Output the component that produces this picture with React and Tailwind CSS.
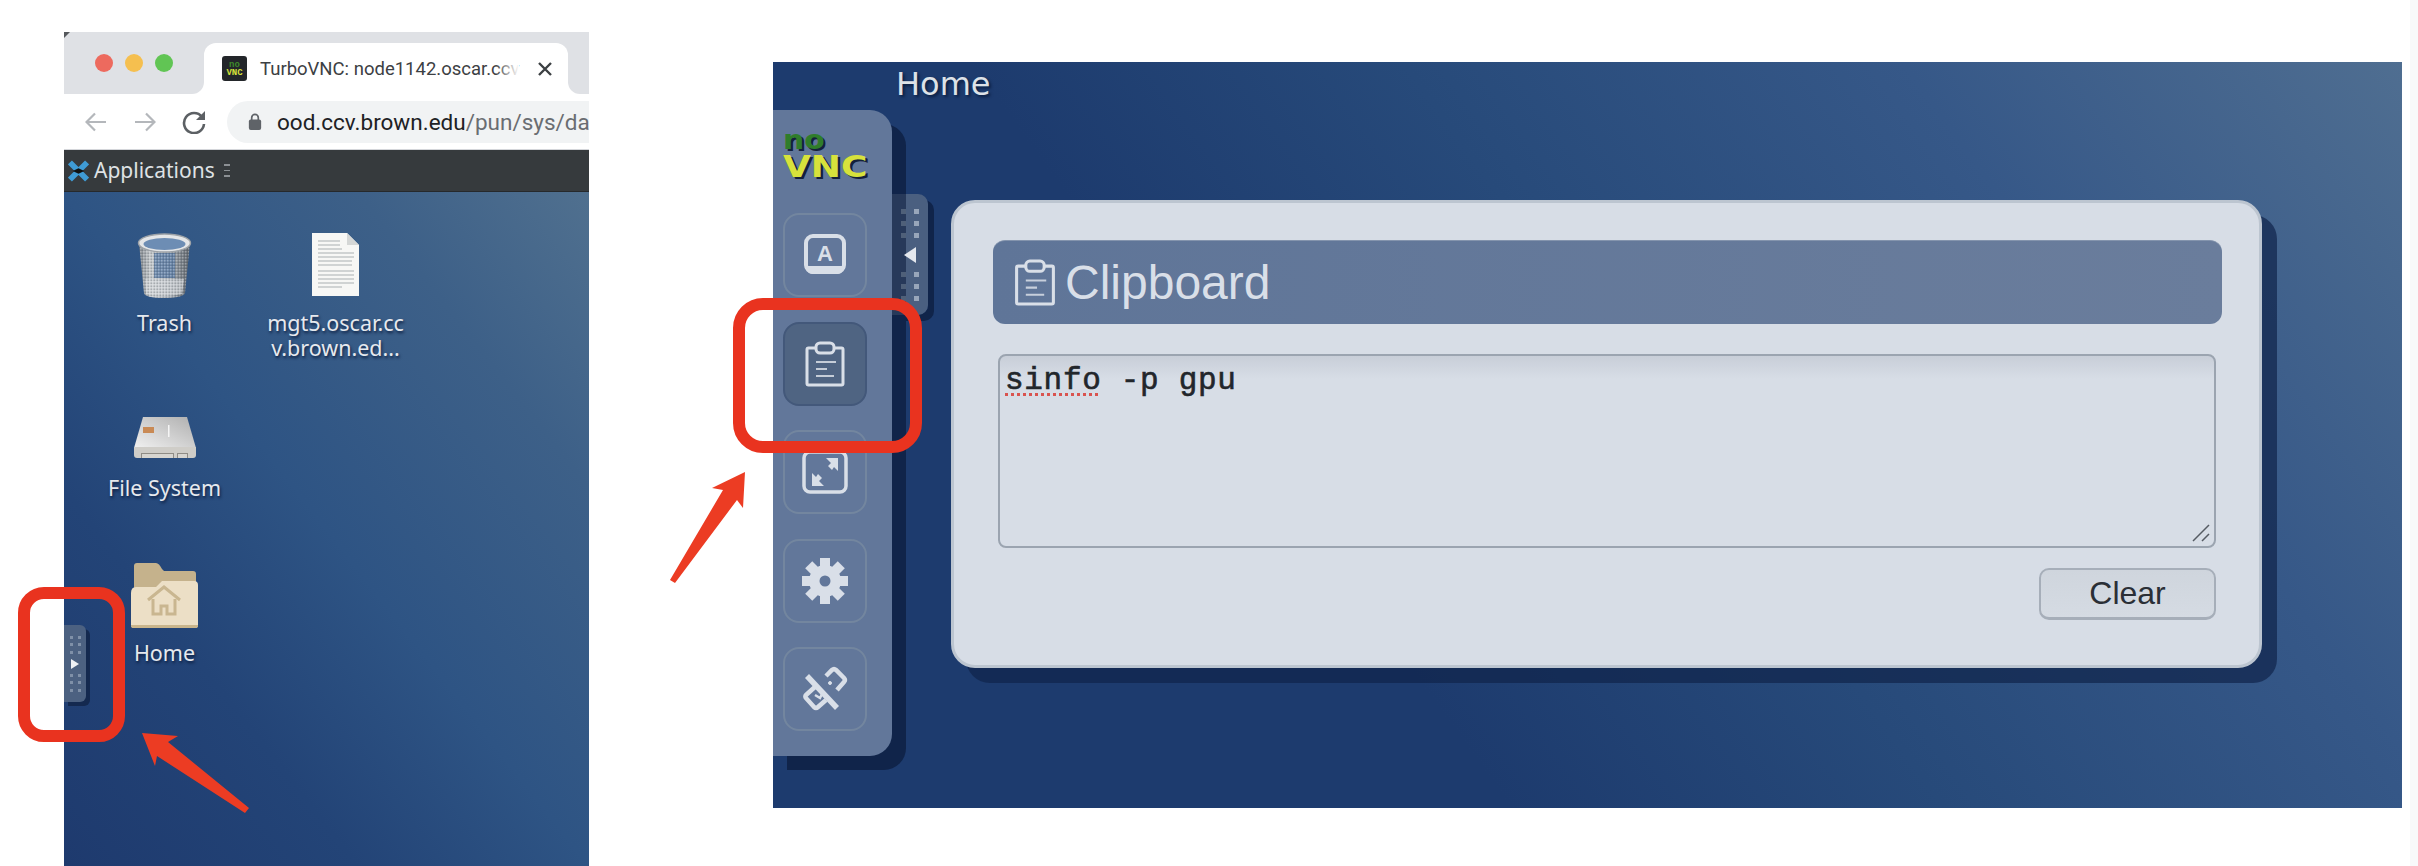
const sans = "font-['Liberation_Sans',Arial,sans-serif]"

function ClipboardIcon({ className }) {
  return (
    <svg viewBox="0 0 40 46" fill="none" stroke="#d9dfe8" className={className}>
      <path d="M11 7H3.500a1.500 1.500 0 0 0-1.500 1.500v34A1.500 1.500 0 0 0 3.500 44h33a1.500 1.500 0 0 0 1.500-1.500v-34A1.500 1.500 0 0 0 36.500 7H29" strokeWidth="3" />
      <rect x="11" y="2" width="18" height="10" rx="4" strokeWidth="3" />
      <path d="M11 21h20M11 28h11M11 35h18" strokeWidth="2" opacity="0.85" />
    </svg>
  )
}

function ExtraKeysIcon() {
  return (
    <svg viewBox="0 0 42 42" className="w-[42px] h-[42px]" fill="none">
      <rect x="2" y="2" width="38" height="36" rx="7" stroke="#d9dfe8" strokeWidth="4" />
      <path d="M3 32h36v3a5 5 0 0 1-5 5H8a5 5 0 0 1-5-5z" fill="#d9dfe8" />
      <text x="21" y="27" textAnchor="middle" fontSize="22" fontWeight="700" fontFamily="Liberation Sans" fill="#d9dfe8">A</text>
    </svg>
  )
}

function FullscreenIcon() {
  return (
    <svg viewBox="0 0 46 44" className="w-[46px] h-[44px]" fill="none">
      <rect x="2" y="2" width="42" height="40" rx="6" stroke="#d9dfe8" strokeWidth="3.500" />
      <path d="M24 8h12v13l-4-4-2 3-4-4 3-3z" fill="#d9dfe8" />
      <path d="M22 36H10V23l4 4 2-3 4 4-3 3z" fill="#d9dfe8" />
    </svg>
  )
}

function GearIcon() {
  const teeth = [0, 45, 90, 135, 180, 225, 270, 315]
  return (
    <svg viewBox="0 0 46 46" className="w-[46px] h-[46px]">
      {teeth.map((deg) => (
        <rect key={deg} x="18" y="0" width="10" height="12" fill="#d9dfe8" transform={`rotate(${deg} 23 23)`} />
      ))}
      <circle cx="23" cy="23" r="16" fill="#d9dfe8" />
      <circle cx="23" cy="23" r="5.500" fill="#62779a" />
    </svg>
  )
}

function DisconnectIcon() {
  return (
    <svg viewBox="0 0 46 46" className="w-[46px] h-[46px]" fill="none" stroke="#d9dfe8" strokeWidth="4.500">
      <path d="M5 10l30 32" strokeWidth="5.500" />
      <path d="M24 10l6-6a3 3 0 0 1 4 0l8 8a3 3 0 0 1 0 4l-7 8" />
      <path d="M14 20l-10 9a2 2 0 0 0 0 3l8 9a3 3 0 0 0 4 0l8-7" />
      <circle cx="28" cy="17" r="1.500" fill="#d9dfe8" strokeWidth="1" />
      <path d="M13 29l5 3 2-4" strokeWidth="2.500" />
    </svg>
  )
}

function ToolButton({ active, children }) {
  return (
    <div
      className={`w-[84px] h-[84px] rounded-2xl border-2 flex items-center justify-center ${
        active ? "bg-[#4f6482] border-[#43587a]" : "border-[#73869f]"
      }`}
    >
      {children}
    </div>
  )
}

function SmallDots() {
  return (
    <div className="grid grid-cols-2 gap-x-[5px] gap-y-[4.500px]">
      {[0, 1, 2, 3, 4, 5].map((n) => (
        <div key={n} className="w-[3px] h-[3px] bg-[#7f90a8]" />
      ))}
    </div>
  )
}

function BigDots() {
  return (
    <div className="grid grid-cols-2 gap-x-[8px] gap-y-[7px]">
      {[0, 1, 2, 3, 4, 5].map((n) => (
        <div key={n} className={`w-[5px] h-[5px] ${n % 2 ? "bg-[#98a6ba]" : "bg-[#4f6079]"}`} />
      ))}
    </div>
  )
}

function TrashIcon() {
  return (
    <svg viewBox="0 0 55 66" className="w-[55px] h-[66px]">
      <defs>
        <linearGradient id="can" x1="0" x2="1" y1="0" y2="0">
          <stop offset="0" stopColor="#7f858b" />
          <stop offset="0.22" stopColor="#c6cacd" />
          <stop offset="0.6" stopColor="#a2a9b1" />
          <stop offset="1" stopColor="#5f656c" />
        </linearGradient>
        <pattern id="mesh" width="3" height="3" patternUnits="userSpaceOnUse">
          <rect width="1.500" height="1.500" fill="#ffffff" opacity="0.3" />
          <rect x="1.500" y="1.500" width="1.500" height="1.500" fill="#30363c" opacity="0.25" />
        </pattern>
      </defs>
      <path d="M2 10l5 50q1 5 20 5t21-5l5-50z" fill="url(#can)" />
      <rect x="17" y="20" width="21" height="25" fill="#4f73a3" opacity="0.7" />
      <path d="M8 46h39l-2 15q-18 4-36 0z" fill="#d6d9db" opacity="0.7" />
      <path d="M2 10l5 50q1 5 20 5t21-5l5-50z" fill="url(#mesh)" />
      <ellipse cx="27.500" cy="10" rx="26" ry="9" fill="#e4e6e8" stroke="#9ea3a8" strokeWidth="1.500" />
      <ellipse cx="27.500" cy="11" rx="21" ry="6" fill="#6d8db4" />
    </svg>
  )
}

function DocIcon() {
  return (
    <svg viewBox="0 0 47 63" className="w-[47px] h-[63px]">
      <path d="M0 0h35l12 12v51H0z" fill="#f7f7f5" />
      <path d="M35 0l12 12H35z" fill="#d5d7d6" />
      <path
        d="M6 8h22M6 12h22M6 16h24M6 20h36M6 24h36M6 28h34M6 32h34M6 38h36M6 42h36M6 46h36M6 50h36M6 54h24"
        stroke="#c4c7c7"
        strokeWidth="1.500"
      />
    </svg>
  )
}

function DiskIcon() {
  return (
    <svg viewBox="0 0 64 42" className="w-[64px] h-[42px]">
      <defs>
        <linearGradient id="disk" x1="0" x2="1" y1="1" y2="0">
          <stop offset="0" stopColor="#f1f1f1" />
          <stop offset="1" stopColor="#aeaeae" />
        </linearGradient>
      </defs>
      <path d="M10 0h44l9 31H1z" fill="url(#disk)" />
      <rect x="10" y="10" width="11" height="6" fill="#c98a55" />
      <rect x="35" y="8" width="1.500" height="12" fill="#f5f5f5" />
      <path d="M1 30h62v8q0 3-3 3H4q-3 0-3-3z" fill="#cfcdc8" />
      <path d="M8 36h33v5H8zM44 36h11v5H44z" fill="#8f8c86" />
      <path d="M9 37h31v4H9zM45 37h9v4h-9z" fill="#d7d5d0" />
    </svg>
  )
}

function FolderIcon() {
  return (
    <svg viewBox="0 0 67 65" className="w-[67px] h-[65px]">
      <path d="M3 3q0-3 3-3h19q3 0 6 6l2 2h29q3 0 3 3v30H3z" fill="#c5b28c" />
      <path d="M0 30q0-6 5-6h20l6-6h32q4 0 4 4v40q0 3-3 3H3q-3 0-3-3z" fill="#ecdfc6" />
      <path d="M0 62h67v1q0 2-3 2H3q-3 0-3-2z" fill="#c9b58c" />
      <g fill="none" stroke="#c9b690" strokeWidth="3">
        <path d="M17 37l16-13 16 13" />
        <path d="M22 36v15h8v-8h6v8h8V36" />
      </g>
    </svg>
  )
}

function DesktopItem({ children, lines }) {
  return (
    <div className="flex flex-col items-center">
      <div className="h-[77px] flex items-start justify-center">{children}</div>
      <div className="font-['Noto_Sans',sans-serif] text-[21.500px] leading-[25px] text-[#e6e9ee] text-center whitespace-nowrap [text-shadow:1px_2px_3px_#0b1d3f]">
        {lines.map((line) => (
          <div key={line}>{line}</div>
        ))}
      </div>
    </div>
  )
}

function BrowserShot() {
  return (
    <div className="w-[525px] mt-[32px] flex flex-col shrink-0 overflow-hidden">
      {/* Tab strip */}
      <div className="h-[62px] bg-[linear-gradient(180deg,#dfe1e5_50%,#ffffff_50%)] flex items-end">
        <div className="w-[140px] h-[62px] pb-[22px] pl-[31px] flex items-end gap-[12px] rounded-br-[12px] bg-[#dfe1e5]">
          <div className="w-[18px] h-[18px] rounded-full bg-[#ed6a5e]" />
          <div className="w-[18px] h-[18px] rounded-full bg-[#f5bf4f]" />
          <div className="w-[18px] h-[18px] rounded-full bg-[#61c554]" />
        </div>
        <div className="w-[364px] h-[51px] bg-white rounded-t-[12px] pl-[18px] pr-[16px] flex items-center gap-[13px]">
          <div className="w-[25px] h-[25px] rounded-[3px] bg-[#23262a] flex flex-col items-center justify-center font-['Liberation_Mono',monospace] font-bold text-[9px] leading-[8px] shrink-0">
            <span className="text-[#3e8a2b]">no</span>
            <span className="text-[#d6e23a]">VNC</span>
          </div>
          <div className="relative whitespace-nowrap font-['Roboto',sans-serif] text-[18.500px] leading-[22px] text-[#3c4043]">
            TurboVNC: node1142.oscar.ccv
            <div className="absolute inset-y-0 right-0 w-[24px] bg-gradient-to-r from-white/0 to-white" />
          </div>
          <svg viewBox="0 0 14 14" className="w-[14px] h-[14px] ml-auto shrink-0" stroke="#3c4043" strokeWidth="2.400">
            <path d="M1 1l12 12M13 1L1 13" />
          </svg>
        </div>
        <div className="flex-1 h-[62px] bg-[#dfe1e5] rounded-bl-[12px]" />
      </div>
      {/* Toolbar */}
      <div className="h-[56px] bg-white border-b border-[#d4d6da] flex items-center pl-[21px]">
        <svg viewBox="0 0 22 20" className="w-[22px] h-[20px] mr-[27px]" fill="none" stroke="#b4b7bb" strokeWidth="2.200">
          <path d="M21 10H2M10 1.500L1.500 10l8.500 8.500" />
        </svg>
        <svg viewBox="0 0 22 20" className="w-[22px] h-[20px] mr-[26px]" fill="none" stroke="#b4b7bb" strokeWidth="2.200">
          <path d="M1 10h19M12 1.500l8.500 8.500-8.500 8.500" />
        </svg>
        <svg viewBox="0 0 24 24" className="w-[24px] h-[24px] mr-[21px]" fill="none" stroke="#5c6064" strokeWidth="2.600">
          <path d="M20 7a10 10 0 1 0 2 7" />
          <path d="M23 1v9h-9z" fill="#5c6064" stroke="none" />
        </svg>
        <div className="flex-1 h-[42px] bg-[#f1f3f4] rounded-l-full flex items-center pl-[21px] gap-[15px] overflow-hidden">
          <svg viewBox="0 0 14 18" className="w-[14px] h-[17px] shrink-0">
            <path d="M3.500 8V5a3.500 3.500 0 0 1 7 0v3" fill="none" stroke="#5f6368" strokeWidth="1.800" />
            <rect x="0.500" y="7" width="13" height="11" rx="2" fill="#5f6368" />
          </svg>
          <div className="font-['Roboto',sans-serif] text-[22.500px] leading-[28px] whitespace-nowrap text-[#202124]">
            ood.ccv.brown.edu<span className="text-[#6a6d71]">/pun/sys/da</span>
          </div>
        </div>
      </div>
      {/* Desktop panel */}
      <div className="h-[42px] bg-[#363a3d] border-b border-[#26292c] flex items-center pl-[4px] gap-[5px]">
        <svg viewBox="0 0 22 22" className="w-[21px] h-[22px]">
          <path d="M2 2l18 18M20 2L2 20" stroke="#3f9bd5" strokeWidth="6" />
          <path d="M5 11l6-3 6 3-6 3z" fill="#111" />
        </svg>
        <span className="font-['Noto_Sans',sans-serif] text-[21px] text-[#dfe2e5]">Applications</span>
        <div className="ml-[4px] w-[6px] flex flex-col gap-[4px]">
          <div className="h-[1.500px] bg-[#8c9094]" />
          <div className="h-[1.500px] bg-[#8c9094]" />
          <div className="h-[1.500px] bg-[#8c9094]" />
        </div>
      </div>
      {/* Desktop */}
      <div className="relative h-[674px] bg-[linear-gradient(to_bottom_left,#50708f_0%,#3d6088_22%,#2e5484_50%,#234477_72%,#1e3a6e_100%)] pl-[15px] pt-[41px]">
        <div className="grid grid-cols-[171px_171px] auto-rows-[165px]">
          <DesktopItem lines={["Trash"]}>
            <TrashIcon />
          </DesktopItem>
          <DesktopItem lines={["mgt5.oscar.cc", "v.brown.ed..."]}>
            <DocIcon />
          </DesktopItem>
          <div className="col-start-1">
            <DesktopItem lines={["File System"]}>
              <div className="pt-[19px]">
                <DiskIcon />
              </div>
            </DesktopItem>
          </div>
          <div className="col-start-1">
            <DesktopItem lines={["Home"]}>
              <FolderIcon />
            </DesktopItem>
          </div>
        </div>
        <div className="absolute left-0 top-[433px] w-[22px] h-[77px] rounded-r-[6px] bg-[#4c6181] shadow-[4px_4px_0_#14294f] flex flex-col items-center justify-center gap-[5px]">
          <SmallDots />
          <div className="w-0 h-0 border-y-[5px] border-y-transparent border-l-[8px] border-l-[#eef1f5]" />
          <SmallDots />
        </div>
      </div>
    </div>
  )
}

function NoVncShot() {
  return (
    <div className="relative w-[1629px] h-[746px] mt-[62px] ml-[184px] shrink-0 overflow-hidden bg-[linear-gradient(234deg,#4f6e91_0%,#365888_23%,#274a7a_46%,#1d3b6e_66%,#1d3b6e_100%)]">
      <div className="pl-[123px] pt-[2px] h-[48px] font-['DejaVu_Sans',sans-serif] text-[32px] leading-[40px] text-[#dde2e8] [text-shadow:2px_2px_3px_#0b1d3f]">
        Home
      </div>
      <div className="flex items-start">
        {/* Control bar */}
        <div className="w-[119px] h-[646px] bg-[#62779a] rounded-r-[22px] shadow-[14px_14px_0_#10244a] pl-[10px] pt-[18px] shrink-0 relative z-10">
          <div className="h-[85px] font-['DejaVu_Sans',sans-serif] font-bold [text-shadow:2px_2px_0_#14203a]">
            <div className="h-[26px] text-[27px] leading-[24px] text-[#2f7d2a] scale-x-[1.100] origin-left">no</div>
            <div className="h-[26px] text-[30px] leading-[26px] text-[#d7e23c] scale-x-[1.200] origin-left">VNC</div>
          </div>
          <div className="flex flex-col gap-[24.500px]">
            <ToolButton>
              <ExtraKeysIcon />
            </ToolButton>
            <ToolButton active>
              <ClipboardIcon className="w-[40px] h-[46px]" />
            </ToolButton>
            <ToolButton>
              <FullscreenIcon />
            </ToolButton>
            <ToolButton>
              <GearIcon />
            </ToolButton>
            <ToolButton>
              <DisconnectIcon />
            </ToolButton>
          </div>
        </div>
        {/* Handle */}
        <div className="mt-[84px] w-[36px] h-[121px] rounded-r-[10px] bg-[linear-gradient(90deg,#27395a_14px,#4a5f80_14px)] shadow-[6px_6px_0_#10244a] flex flex-col items-center justify-center gap-[7px] shrink-0 relative z-20">
          <BigDots />
          <div className="w-0 h-0 border-y-[8px] border-y-transparent border-r-[12px] border-r-[#e4e8ee] my-[2px]" />
          <BigDots />
        </div>
        {/* Clipboard panel */}
        <div className="ml-[23px] mt-[90px] w-[1311px] h-[468px] rounded-[24px] bg-[#d7dde6] border-[3px] border-[#bcc5d0] shadow-[15px_15px_0_#10244ab3] px-[39px] pt-[37px] shrink-0">
          <div className="h-[84px] w-[1229px] rounded-[12px] bg-[linear-gradient(90deg,#5f7598,#6a7d9c)] flex items-center pl-[21px] gap-[9px] border-t border-[#8494ad]">
            <ClipboardIcon className="w-[42px] h-[47px]" />
            <span className={`${sans} text-[48px] text-[#d9dfe8]`}>Clipboard</span>
          </div>
          <div className="mt-[30px] ml-[5px] w-[1218px] h-[194px] rounded-[8px] border-2 border-[#9ba4b0] bg-[linear-gradient(180deg,#c8ced8_0%,#d7dde6_12%)] relative pl-[5px] pt-[5px] font-['Liberation_Mono',monospace] text-[31px] tracking-[0.700px] leading-[40px] text-[#22262b] [-webkit-text-stroke:0.6px_#22262b]">
            <span className="underline decoration-dotted decoration-[#d9534f] decoration-[3px] underline-offset-[4px]">sinfo</span> -p gpu
            <svg viewBox="0 0 20 20" className="absolute right-[3px] bottom-[3px] w-[20px] h-[20px]" stroke="#555b63" strokeWidth="1.500">
              <path d="M2 18L18 2M11 18l7-7" />
            </svg>
          </div>
          <div className="mt-[20px] flex justify-end">
            <div className={`${sans} w-[177px] h-[52px] rounded-[10px] border-2 border-b-[3px] border-[#a6aeb9] bg-[linear-gradient(180deg,#cfd5dd,#d5dbe3)] text-[32px] leading-[46px] text-center text-[#2a2f36] mr-[4px]`}>
              Clear
            </div>
          </div>
        </div>
      </div>
    </div>
  )
}

export default function App() {
  return (
    <div className="relative w-[2418px] h-[866px] bg-white overflow-hidden flex items-start pl-[64px]">
      <BrowserShot />
      <NoVncShot />
      <div className="ml-[8px] w-[8px] h-[866px] bg-[#f8f9fa] shrink-0" />

      {/* Red annotations */}
      <div className="absolute z-30 left-[18px] top-[587px] w-[107px] h-[155px] rounded-[26px] border-[12px] border-[#e9331f]" />
      <div className="absolute z-30 left-[733px] top-[298px] w-[189px] h-[155px] rounded-[30px] border-[12px] border-[#e9331f]" />
      <svg viewBox="0 0 2418 866" className="absolute z-30 inset-0 w-[2418px] h-[866px] pointer-events-none">
        <path d="M64 32h6l-6 6z" fill="#55585c" />
        <path d="M142 733L178 736L168 742L249 808L245 813L157 756L155 766Z" fill="#ec3c23" />
        <path d="M745 472L743 508L737 500L675 583L670 580L723 490L712 488Z" fill="#ec3c23" />
      </svg>
    </div>
  )
}
